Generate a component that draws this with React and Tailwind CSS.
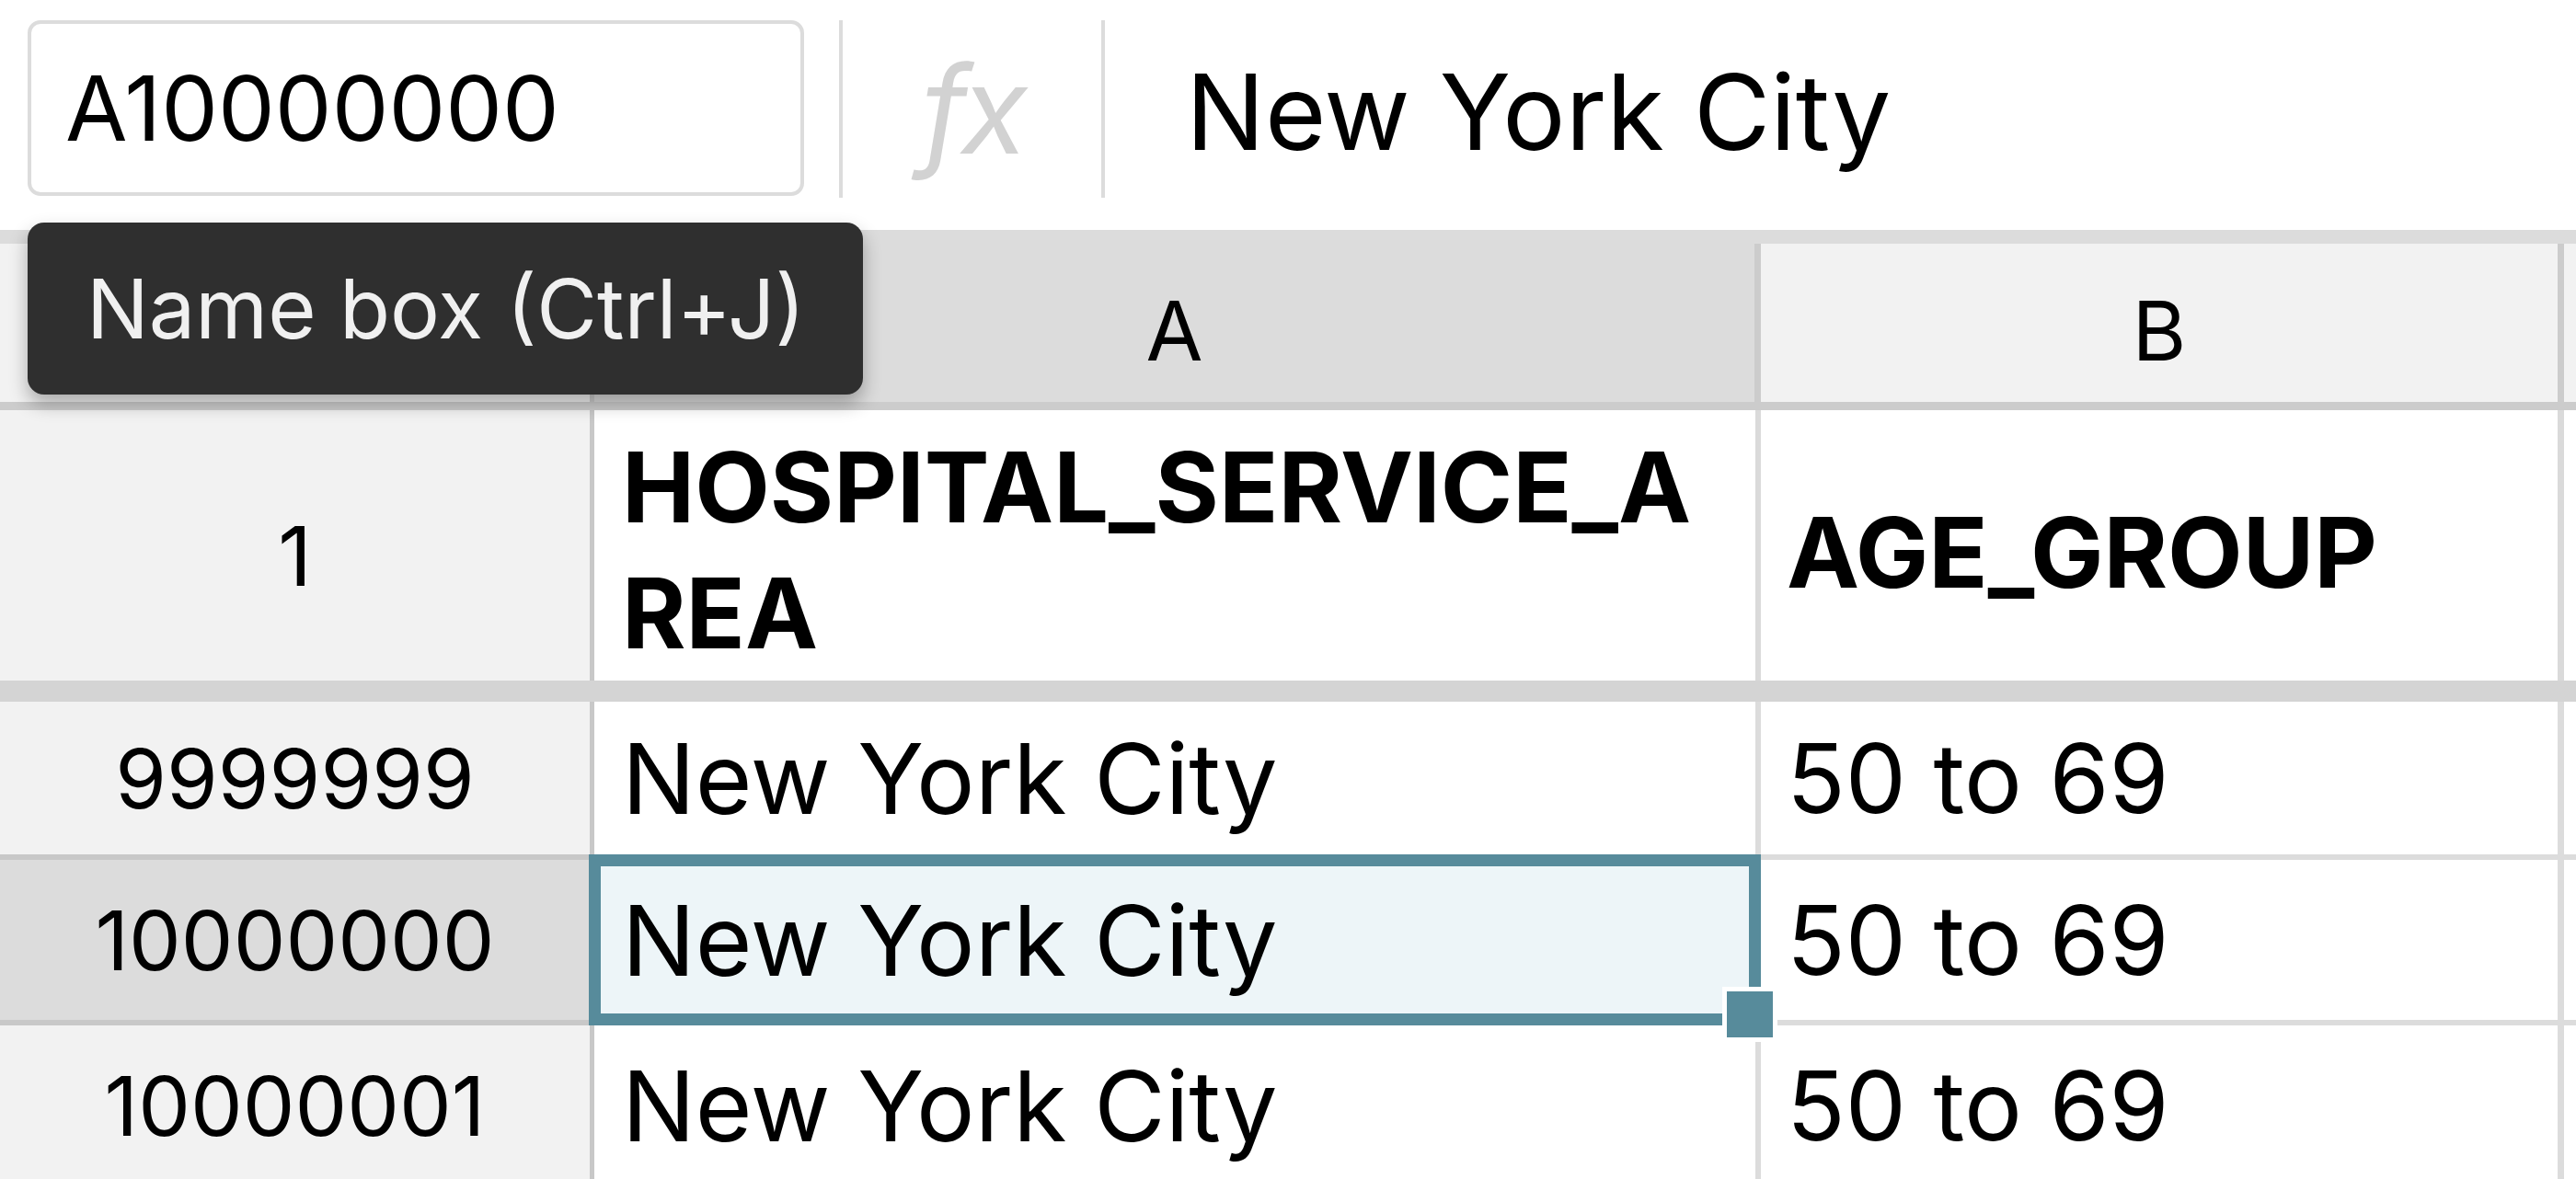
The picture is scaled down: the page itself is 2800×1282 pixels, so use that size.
import React from "react";

const rows = [
  { num: "9999999", city: "New York City", age: "50 to 69", h: "h-[172px]", selected: false },
  { num: "10000000", city: "New York City", age: "50 to 69", h: "h-[180px]", selected: true },
  { num: "10000001", city: "New York City", age: "50 to 69", h: "h-[180px]", selected: false },
];

function FormulaBar() {
  return (
    <div className="flex items-start h-[250px] pt-[22px] pl-[30px]">
      <div className="w-[844px] h-[191px] shrink-0 border-[4px] border-[#dcdcdc] rounded-[14px] flex items-center pl-[37px] text-[98px] text-black">
        A10000000
      </div>
      <div className="ml-[38px] w-[4px] h-[193px] shrink-0 bg-[#dcdcdc]" />
      <div className="w-[281px] h-[193px] shrink-0 flex items-center justify-center">
        <span className="italic text-[132px] text-[#d2d2d2] tracking-[-6px] leading-none">fx</span>
      </div>
      <div className="w-[4px] h-[193px] shrink-0 bg-[#dcdcdc]" />
      <div className="h-[193px] flex items-center pl-[88px] pt-[6px] text-[114px] text-black whitespace-nowrap">
        New York City
      </div>
    </div>
  );
}

function ColumnHeader() {
  return (
    <div className="flex h-[196px] border-t-[15px] border-b-[9px] border-t-[#dcdcdc] border-b-[#cccccc]">
      <div className="w-[646px] shrink-0 bg-[#f2f2f2] border-r-[5px] border-[#cccccc]" />
      <div className="w-[1261px] shrink-0 bg-[#dcdcdc] flex items-center justify-center pt-[16px] text-[90px]">
        A
      </div>
      <div className="w-[880px] shrink-0 bg-[#f2f2f2] border-l-[7px] border-r-[7px] border-[#cccccc] flex items-center justify-center pt-[16px] text-[90px]">
        B
      </div>
      <div className="flex-1 bg-[#f2f2f2]" />
    </div>
  );
}

function HeaderRow() {
  return (
    <div className="flex h-[294px]">
      <div className="w-[646px] shrink-0 bg-[#f2f2f2] border-r-[5px] border-[#c8c8c8] flex items-center justify-center pt-[22px] text-[90px]">
        1
      </div>
      <div className="w-[1268px] shrink-0 border-r-[6px] border-[#dadada] pl-[30px] flex flex-col justify-center pt-[10px] font-bold text-[106px] leading-[137px]">
        <span>HOSPITAL_SERVICE_A</span>
        <span>REA</span>
      </div>
      <div className="w-[873px] shrink-0 border-r-[7px] border-[#dadada] pl-[28px] flex items-center pt-[14px] font-bold text-[106px]">
        AGE_GROUP
      </div>
      <div className="flex-1" />
    </div>
  );
}

function DataRow({ row }) {
  return (
    <div className={"flex shrink-0 " + row.h}>
      <div
        className={
          row.selected
            ? "w-[646px] shrink-0 bg-[#dcdcdc] border-r-[5px] border-b-[6px] border-r-[#c8c8c8] border-b-[#c8c8c8] flex items-center justify-center text-[90px]"
            : "w-[646px] shrink-0 bg-[#f2f2f2] border-r-[5px] border-b-[6px] border-r-[#c8c8c8] border-b-[#c8c8c8] flex items-center justify-center text-[90px]"
        }
      >
        {row.num}
      </div>
      <div
        className={
          row.selected
            ? "relative z-10 w-[1268px] shrink-0 bg-[#edf5f8] border-r-[6px] border-b-[6px] border-[#dcdcdc] pl-[30px] flex items-center text-[106px] whitespace-nowrap"
            : "w-[1268px] shrink-0 border-r-[6px] border-b-[6px] border-[#dcdcdc] pl-[30px] flex items-center text-[106px] whitespace-nowrap"
        }
      >
        {row.city}
        {row.selected && (
          <>
            <div className="absolute -left-[6px] -top-[6px] -right-[6px] -bottom-[6px] border-[13px] border-[#578b9b] pointer-events-none" />
            <div className="absolute -right-[24px] -bottom-[24px] w-[60px] h-[60px] bg-[#578b9b] border-[5px] border-white" />
          </>
        )}
      </div>
      <div className="w-[873px] shrink-0 border-r-[7px] border-b-[6px] border-[#dcdcdc] pl-[28px] flex items-center text-[105px] whitespace-nowrap">
        {row.age}
      </div>
      <div className="flex-1 border-b-[6px] border-[#dcdcdc]" />
    </div>
  );
}

export default function App() {
  return (
    <div className="relative w-[2800px] h-[1282px] overflow-hidden bg-white text-black font-['Inter','Liberation_Sans',sans-serif]">
      <FormulaBar />
      <ColumnHeader />
      <HeaderRow />
      <div className="h-[23px] bg-[#d4d4d4]" />
      {rows.map((row) => (
        <DataRow key={row.num} row={row} />
      ))}

      <div className="absolute left-[30px] top-[242px] w-[908px] h-[187px] bg-[#2f2f2f] rounded-[18px] shadow-[0_10px_20px_rgba(0,0,0,0.3)] flex items-center pl-[64px] text-[90px] text-[#f0f0f0] whitespace-nowrap">
        Name box (Ctrl+J)
      </div>
    </div>
  );
}
